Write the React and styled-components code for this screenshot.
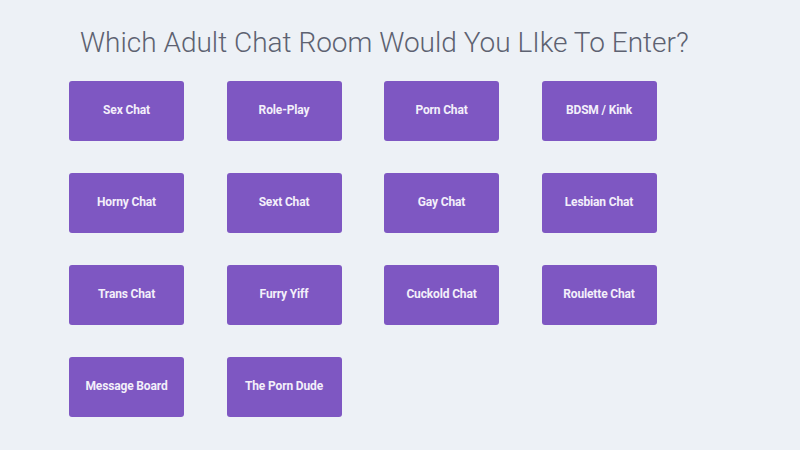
import React from "react";
import styled, { createGlobalStyle } from "styled-components";

const rooms = [
  "Sex Chat",
  "Role-Play",
  "Porn Chat",
  "BDSM / Kink",
  "Horny Chat",
  "Sext Chat",
  "Gay Chat",
  "Lesbian Chat",
  "Trans Chat",
  "Furry Yiff",
  "Cuckold Chat",
  "Roulette Chat",
  "Message Board",
  "The Porn Dude",
];

const App = () => {
  return (
    <Page>
      <GlobalStyle />
      <Title>Which Adult Chat Room Would You LIke To Enter?</Title>
      <RoomGrid>
        {rooms.map((room) => (
          <RoomButton key={room}>{room}</RoomButton>
        ))}
      </RoomGrid>
    </Page>
  );
};

export default App;

const GlobalStyle = createGlobalStyle`
  html, body {
    margin: 0;
    background: #edf1f6;
  }
`;

const Page = styled.div`
  width: 800px;
  height: 450px;
  overflow: hidden;
  background: #edf1f6;
  font-family: Roboto, "Liberation Sans", sans-serif;
`;

const Title = styled.h1`
  margin: 0;
  padding: 26px 0 0 80px;
  font-size: 28px;
  font-weight: 300;
  line-height: 34px;
  color: #5d6271;
  white-space: nowrap;
`;

const RoomGrid = styled.div`
  display: grid;
  grid-template-columns: repeat(4, 115px);
  grid-auto-rows: 59.5px;
  column-gap: 42.5px;
  row-gap: 32.5px;
  padding: 21px 0 0 69px;
`;

const RoomButton = styled.div`
  display: flex;
  align-items: center;
  justify-content: center;
  padding-bottom: 2px;
  box-sizing: border-box;
  background: #7e57c2;
  border-radius: 3px;
  color: #f3effa;
  font-size: 12px;
  font-weight: 700;
  letter-spacing: -0.15px;
  white-space: nowrap;
`;
